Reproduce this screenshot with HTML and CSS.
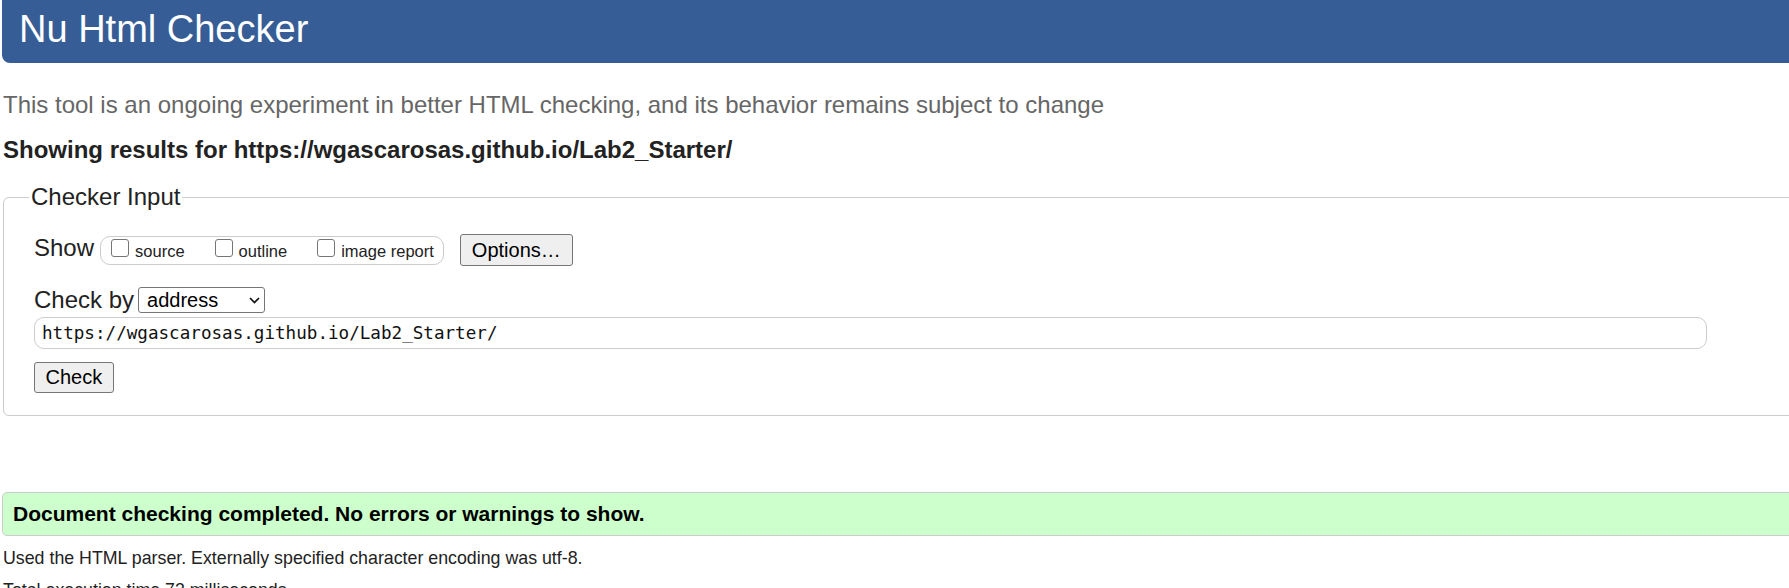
FILE: index.html
```html
<!DOCTYPE html>
<html lang="en">
<head>
<meta charset="utf-8">
<title>Nu Html Checker</title>
<link rel="stylesheet" href="styles.css">
</head>
<body>
<div class="page">
  <h1 class="title">Nu Html Checker</h1>
  <p class="intro">This tool is an ongoing experiment in better HTML checking, and its behavior remains subject to change</p>
  <p class="showing">Showing results for https://wgascarosas.github.io/Lab2_Starter/</p>
  <fieldset class="checker">
    <legend class="legend">Checker Input</legend>
    <div class="row show-row">
      <span class="lbl show-lbl">Show</span>
      <span class="opts">
        <span class="opt"><span class="cb"></span><span class="opt-text">source</span></span>
        <span class="opt"><span class="cb"></span><span class="opt-text">outline</span></span>
        <span class="opt"><span class="cb"></span><span class="opt-text">image report</span></span>
      </span>
      <button class="btn options" type="button">Options…</button>
    </div>
    <div class="row by-row">
      <span class="lbl">Check by</span>
      <span class="select"><span>address</span><svg class="chev" width="11" height="7" viewBox="0 0 11 7"><polyline points="1,1 5.5,5.5 10,1" fill="none" stroke="#111" stroke-width="1.7"/></svg></span>
    </div>
    <div class="url">https://wgascarosas.github.io/Lab2_Starter/</div>
    <button class="btn check" type="button">Check</button>
  </fieldset>
  <div class="success">Document checking completed. No errors or warnings to show.</div>
  <p class="details">Used the HTML parser. Externally specified character encoding was utf-8.</p>
  <p class="details next">Total execution time 73 milliseconds.</p>
</div>
</body>
</html>
```
FILE: styles.css
```css
html, body {
  margin: 0;
  padding: 0;
  background: #fff;
  overflow: hidden;
}
body {
  font-family: "Liberation Sans", Arial, sans-serif;
  color: #222;
}
.page {
  width: 1810px;
}
.title {
  margin: 0 0 0 2px;
  height: 63px;
  line-height: 59px;
  padding-left: 17px;
  font-size: 38px;
  font-weight: normal;
  color: #fff;
  background: #365d95;
  border-radius: 0 0 8px 8px;
}
.intro {
  margin: 28px 0 0 3px;
  font-size: 24px;
  line-height: 28px;
  color: #666;
}
.showing {
  margin: 17px 0 0 3px;
  font-size: 24px;
  line-height: 28px;
  font-weight: bold;
  color: #222;
}
.checker {
  margin: 19px 0 0 3px;
  padding: 23px 0 22px 30px;
  border: 1px solid #ccc;
  border-radius: 6px;
  min-width: 0;
}
.legend {
  margin-left: -5px;
  padding: 0 2px;
  font-size: 24px;
  line-height: 28px;
  color: #222;
}
.row {
  display: flex;
  align-items: center;
}
.show-row {
  height: 32px;
}
.lbl {
  font-size: 24px;
  line-height: 28px;
  color: #222;
}
.show-lbl {
  padding-bottom: 4px;
}
.opts {
  display: flex;
  align-items: flex-start;
  gap: 30px;
  height: 29px;
  box-sizing: border-box;
  margin-left: 6px;
  padding: 2px 9px 0 10px;
  border: 1px solid #ccc;
  border-radius: 10px;
}
.opt {
  display: flex;
  align-items: baseline;
  font-size: 16.5px;
  line-height: 19px;
  color: #222;
}
.cb {
  display: inline-block;
  width: 18px;
  height: 18px;
  box-sizing: border-box;
  margin-right: 6px;
  border: 1.5px solid #767676;
  border-radius: 3px;
  background: #fff;
}
.btn {
  font-family: "Liberation Sans", Arial, sans-serif;
  font-size: 20px;
  color: #000;
  background: #efefef;
  border: 1px solid #767676;
  border-radius: 3px;
  box-sizing: border-box;
}
.options {
  margin-left: 16px;
  height: 32px;
  padding: 0 11px;
}
.by-row {
  margin-top: 21px;
  height: 26px;
}
.select {
  display: flex;
  align-items: center;
  justify-content: space-between;
  margin-left: 4px;
  width: 127px;
  height: 26px;
  box-sizing: border-box;
  padding: 0 4px 0 8px;
  border: 1px solid #767676;
  border-radius: 3px;
  font-size: 20px;
  color: #000;
  background: #fff;
}
.chev {
  display: block;
}
.url {
  margin-top: 4px;
  width: 1673px;
  height: 32px;
  box-sizing: border-box;
  padding-left: 7px;
  border: 1px solid #ccc;
  border-radius: 10px;
  font-family: "DejaVu Sans Mono", "Liberation Mono", monospace;
  font-size: 17.6px;
  line-height: 30px;
  color: #111;
}
.check {
  display: block;
  margin-top: 13px;
  height: 31px;
  padding: 0 10.5px;
}
.success {
  margin: 76px 0 0 2px;
  height: 44px;
  box-sizing: border-box;
  padding: 9px 0 0 10px;
  border: 1px solid #ccc;
  border-radius: 5px;
  background: #ccffcc;
  font-size: 21px;
  line-height: 24px;
  font-weight: bold;
  color: #000;
}
.details {
  margin: 12px 0 0 3px;
  font-size: 17.8px;
  line-height: 21px;
  color: #222;
}
.details.next {
  margin-top: 11px;
}
```
